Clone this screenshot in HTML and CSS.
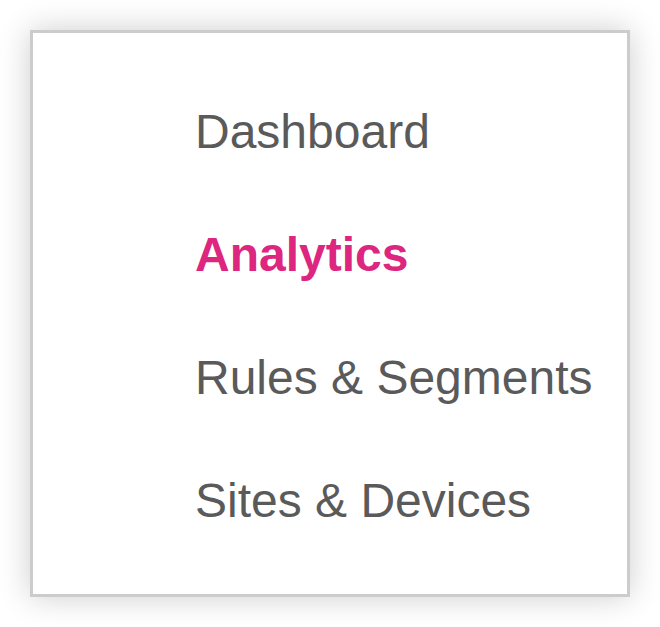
FILE: index.html
```html
<!DOCTYPE html>
<html lang="en">
<head>
<meta charset="utf-8">
<meta name="viewport" content="width=device-width, initial-scale=1">
<title>Navigation</title>
<link rel="stylesheet" href="styles.css">
</head>
<body>
<nav class="menu" aria-label="Main">
  <ul class="menu-list">
    <li><a class="menu-link" href="#">Dashboard</a></li>
    <li><a class="menu-link menu-link-active" href="#" aria-current="page">Analytics</a></li>
    <li><a class="menu-link" href="#">Rules &amp; Segments</a></li>
    <li><a class="menu-link" href="#">Sites &amp; Devices</a></li>
  </ul>
</nav>
</body>
</html>
```
FILE: styles.css
```css
* {
  box-sizing: border-box;
}

body {
  margin: 0;
  padding: 30px;
  background: #fff;
  font-family: "Liberation Sans", Arial, sans-serif;
}

.menu {
  padding: 71px 32px 65px 162px;
  border: 3px solid #ccc;
  background: #fff;
  box-shadow: 0 0 30px rgba(0, 0, 0, 0.2);
}

.menu-list {
  display: flex;
  flex-direction: column;
  gap: 67px;
  margin: 0;
  padding: 0;
  list-style: none;
}

.menu-link {
  display: block;
  color: #5a5a5a;
  font-size: 48px;
  line-height: 56px;
  text-decoration: none;
  white-space: nowrap;
}

.menu-link-active {
  color: #dd2680;
  font-weight: 700;
}
```
